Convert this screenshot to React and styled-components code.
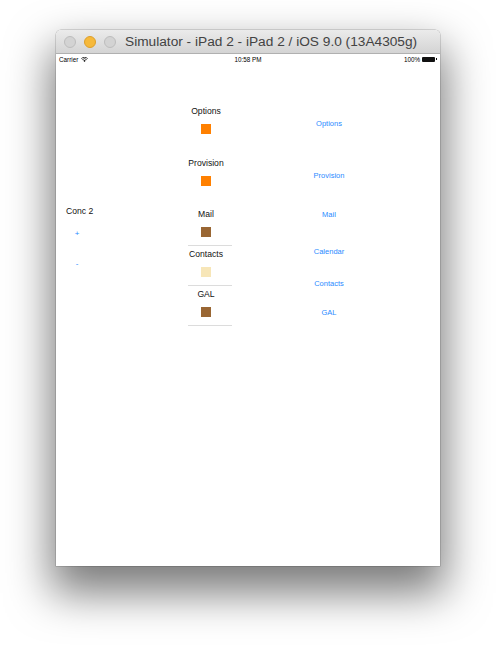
import React from "react";
import styled, { createGlobalStyle } from "styled-components";

const Global = createGlobalStyle`
  html, body { margin: 0; padding: 0; background: #ffffff; }
  body { font-family: "Liberation Sans", Arial, sans-serif; }
`;

const Stage = styled.div`
  width: 496px;
  height: 646px;
  padding: 30px 0 0 56px;
  box-sizing: border-box;
  overflow: hidden;
`;

const Window = styled.div`
  width: 384px;
  border-radius: 5px 5px 0 0;
  box-shadow: 0 22px 44px 5px rgba(0, 0, 0, 0.52), 0 0 0 0.5px rgba(0, 0, 0, 0.25);
  background: #fff;
`;

const TitleBar = styled.div`
  height: 24px;
  border-radius: 5px 5px 0 0;
  background: linear-gradient(#ebebeb, #d4d4d4);
  border-bottom: 1px solid #b0b0b0;
  box-sizing: border-box;
  display: flex;
  align-items: center;
  padding-left: 8px;
`;

const Lights = styled.div`
  display: flex;
  gap: 8px;
  margin-right: 9px;
`;

const Light = styled.span`
  width: 12px;
  height: 12px;
  border-radius: 50%;
  box-sizing: border-box;
  background: ${p => (p.$active ? "#f6b93b" : "#d3d3d3")};
  border: 0.5px solid ${p => (p.$active ? "#dd9f2a" : "#bdbdbd")};
`;

const Title = styled.div`
  font-size: 13.7px;
  color: #434343;
  white-space: nowrap;
  line-height: 16px;
`;

const Screen = styled.div`
  height: 512px;
  background: #fff;
  display: flex;
  flex-direction: column;
`;

const StatusBar = styled.div`
  height: 10px;
  display: grid;
  grid-template-columns: 1fr auto 1fr;
  align-items: center;
  padding: 0 3px;
  font-size: 6.3px;
  font-weight: normal;
  color: #000;
`;

const StatusLeft = styled.div`
  display: flex;
  align-items: center;
  gap: 3px;
`;

const StatusRight = styled.div`
  display: flex;
  align-items: center;
  justify-content: flex-end;
  gap: 2px;
`;

const Battery = styled.span`
  width: 13px;
  height: 5px;
  background: #111;
  border-radius: 1px;
  position: relative;
  margin-right: 2px;
  &::after {
    content: "";
    position: absolute;
    right: -2px;
    top: 1.5px;
    width: 1.5px;
    height: 2px;
    background: #111;
  }
`;

const Content = styled.div`
  display: grid;
  grid-template-columns: 132px 44px 194px;
`;

const LeftCol = styled.div`
  padding: 142px 0 0 10px;
  display: flex;
  flex-direction: column;
`;

const Label = styled.div`
  font-size: 8.6px;
  line-height: 11px;
  color: #111;
  white-space: nowrap;
  text-align: ${p => p.$align || "center"};
`;

const SmallButton = styled.div`
  font-size: 8px;
  line-height: 10px;
  color: #2a8bff;
  width: 22px;
  text-align: center;
  margin-top: ${p => p.$gap}px;
`;

const MidCol = styled.div`
  padding-top: 42px;
  display: flex;
  flex-direction: column;
`;

const Group = styled.div`
  width: 44px;
  box-sizing: border-box;
  padding-right: 8px;
  display: flex;
  flex-direction: column;
  align-items: center;
  margin-bottom: ${p => p.$after || 0}px;
  border-bottom: ${p => (p.$line ? "1px solid #dcdcdc" : "none")};
  padding-bottom: ${p => (p.$line ? 8 : 0)}px;
`;

const Swatch = styled.div`
  width: 10px;
  height: 10px;
  margin-top: 7px;
  background: ${p => p.$color};
`;

const RightCol = styled.div`
  display: flex;
  flex-direction: column;
  align-items: center;
`;

const Link = styled.div`
  font-size: 7.5px;
  line-height: 10px;
  color: #2a8bff;
  margin-top: ${p => p.$gap}px;
`;

const WifiIcon = () => (
  <svg width="7" height="5" viewBox="0 0 14 10">
    <path d="M7 10 L4.6 7.4 A3.4 3.4 0 0 1 9.4 7.4 Z" fill="#111" />
    <path d="M2.6 5.4 A6.3 6.3 0 0 1 11.4 5.4" stroke="#111" strokeWidth="1.6" fill="none" />
    <path d="M0.6 3.2 A9.2 9.2 0 0 1 13.4 3.2" stroke="#111" strokeWidth="1.6" fill="none" />
  </svg>
);

const links = [
  { text: "Options", gap: 55 },
  { text: "Provision", gap: 42 },
  { text: "Mail", gap: 29 },
  { text: "Calendar", gap: 27 },
  { text: "Contacts", gap: 22 },
  { text: "GAL", gap: 19 },
];

export default function App() {
  return (
    <>
      <Global />
      <Stage>
        <Window>
          <TitleBar>
            <Lights>
              <Light />
              <Light $active />
              <Light />
            </Lights>
            <Title>Simulator - iPad 2 - iPad 2 / iOS 9.0 (13A4305g)</Title>
          </TitleBar>
          <Screen>
            <StatusBar>
              <StatusLeft>
                <span>Carrier</span>
                <WifiIcon />
              </StatusLeft>
              <span>10:58 PM</span>
              <StatusRight>
                <span>100%</span>
                <Battery />
              </StatusRight>
            </StatusBar>
            <Content>
              <LeftCol>
                <Label $align="left">Conc 2</Label>
                <SmallButton $gap={12}>+</SmallButton>
                <SmallButton $gap={20}>-</SmallButton>
              </LeftCol>
              <MidCol>
                <Group $after={24}>
                  <Label>Options</Label>
                  <Swatch $color="#ff8000" />
                </Group>
                <Group $after={23}>
                  <Label>Provision</Label>
                  <Swatch $color="#ff8000" />
                </Group>
                <Group $line $after={3}>
                  <Label>Mail</Label>
                  <Swatch $color="#996633" />
                </Group>
                <Group $line $after={3}>
                  <Label>Contacts</Label>
                  <Swatch $color="#f7e6b8" />
                </Group>
                <Group $line>
                  <Label>GAL</Label>
                  <Swatch $color="#996633" />
                </Group>
              </MidCol>
              <RightCol>
                {links.map(l => (
                  <Link key={l.text} $gap={l.gap}>{l.text}</Link>
                ))}
              </RightCol>
            </Content>
          </Screen>
        </Window>
      </Stage>
    </>
  );
}
